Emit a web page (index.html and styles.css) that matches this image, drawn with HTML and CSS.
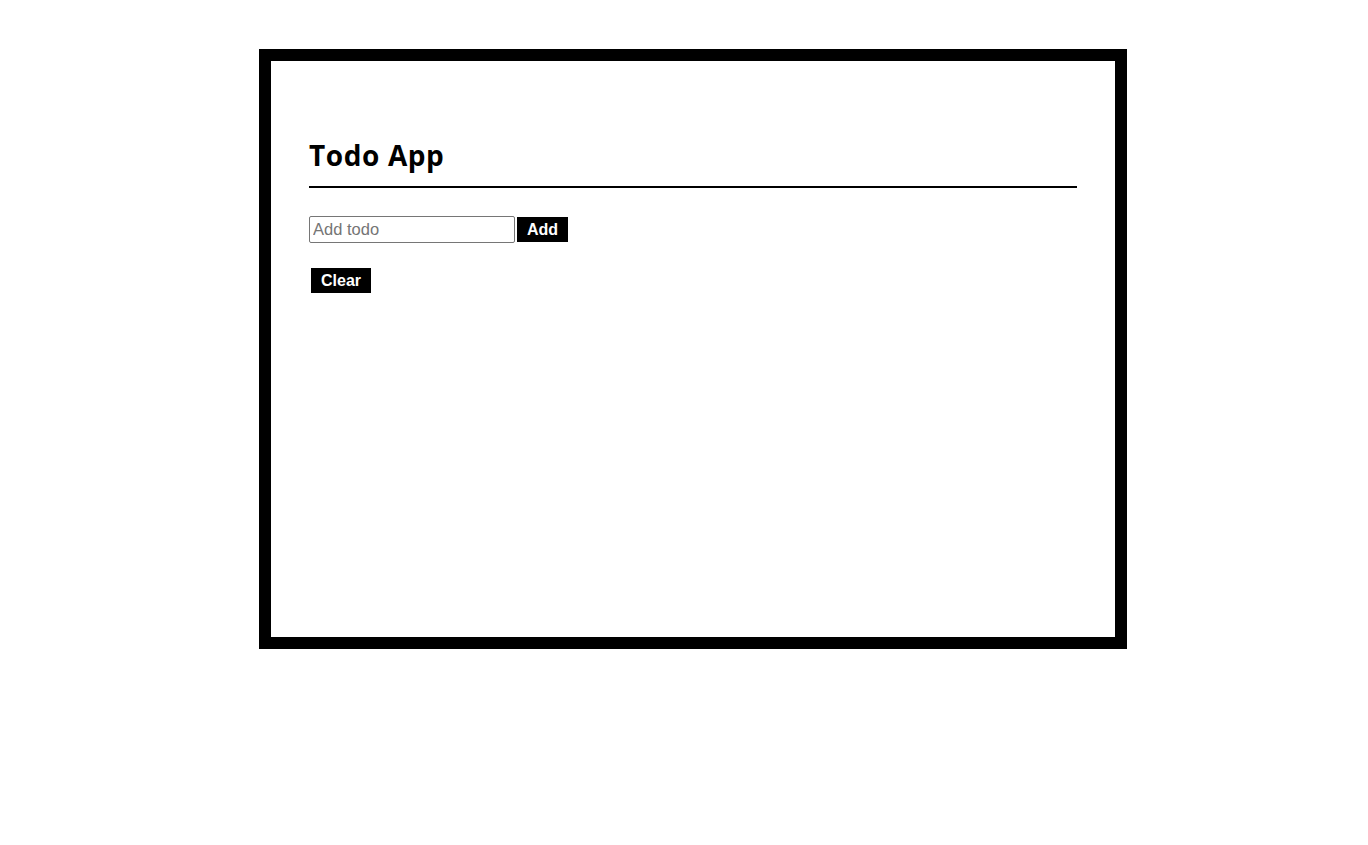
FILE: index.html
```html
<!DOCTYPE html>
<html lang="en">
<head>
<meta charset="utf-8">
<title>Todo App</title>
<link rel="stylesheet" href="styles.css">
</head>
<body>
<div class="frame">
  <h1 class="title">Todo App</h1>
  <form class="add-row">
    <input class="todo-input" type="text" placeholder="Add todo">
    <button class="btn" type="button">Add</button>
  </form>
  <ul class="todo-list"></ul>
  <button class="btn btn-clear" type="button">Clear</button>
</div>
</body>
</html>
```

FILE: styles.css
```css
html, body {
  margin: 0;
  padding: 0;
  background: #fff;
}

body {
  padding: 49px 0 0 259px;
  font-family: "Liberation Sans", Arial, sans-serif;
}

.frame {
  box-sizing: border-box;
  width: 868px;
  height: 600px;
  border: 12px solid #000;
  padding: 77px 38px 0 38px;
}

.title {
  margin: 0;
  font-family: "Open Sans", "Noto Sans", sans-serif;
  font-weight: 700;
  font-size: 28px;
  letter-spacing: 0.6px;
  line-height: 34px;
  color: #000;
  padding-bottom: 14px;
  border-bottom: 2px solid #000;
}

.add-row {
  display: flex;
  align-items: center;
  gap: 2px;
  margin: 28px 0 0 0;
}

.todo-input {
  box-sizing: border-box;
  width: 206px;
  height: 27px;
  margin: 0;
  padding: 1px 3px;
  border: 1px solid #767676;
  border-radius: 2px;
  font-family: "Liberation Sans", Arial, sans-serif;
  font-size: 16.5px;
  color: #000;
}

.todo-input::placeholder {
  color: #757575;
}

.btn {
  box-sizing: border-box;
  height: 25px;
  margin: 0;
  padding: 0 10px;
  border: none;
  border-radius: 0;
  background: #000;
  color: #fff;
  font-family: "Liberation Sans", Arial, sans-serif;
  font-weight: 700;
  font-size: 16px;
  line-height: 25px;
}

.todo-list {
  list-style: none;
  margin: 0;
  padding: 0;
}

.btn-clear {
  display: block;
  margin: 25px 0 0 2px;
}
```
